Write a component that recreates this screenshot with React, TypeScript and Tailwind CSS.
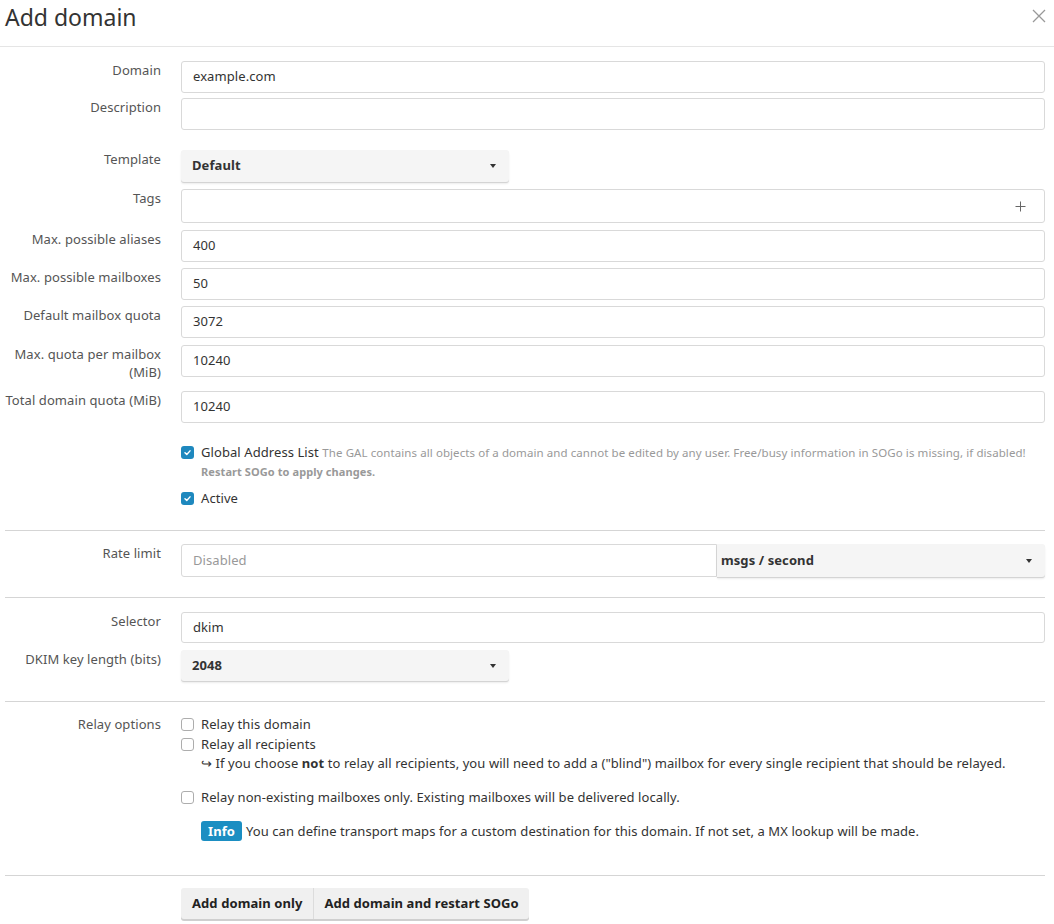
import React from "react";

const font = { fontFamily: '"Noto Sans", "Open Sans", sans-serif' };

function Caret() {
  return <span className="ml-auto inline-block h-0 w-0 border-x-[3px] border-t-[4px] border-x-transparent border-t-[#333]" />;
}

function Input({ value, placeholder, short }: { value?: string; placeholder?: string; short?: boolean }) {
  return (
    <div className={`flex ${short ? "h-[31px]" : "h-[32px]"} items-center rounded-[3px] border border-[#d9d9d9] bg-white px-[11px] text-[13px] text-[#333]`}>
      {value ? value : <span className="text-[#999]">{placeholder}</span>}
    </div>
  );
}

function Select({ value, short }: { value: string; short?: boolean }) {
  return (
    <div className={`flex ${short ? "h-[31px]" : "h-[32px]"} w-[328px] items-center rounded-[3px] bg-[#f5f5f5] px-[11px] pr-[13px] text-[13px] font-bold text-[#333] shadow-[0_1px_0_#d4d4d4,0_2px_2px_rgba(0,0,0,0.08)]`}>
      {value}
      <Caret />
    </div>
  );
}

function Check({ on }: { on?: boolean }) {
  return on ? (
    <span className="flex h-[13px] w-[13px] shrink-0 items-center justify-center rounded-[3px] bg-[#1e88be]">
      <svg width="9" height="9" viewBox="0 0 10 10">
        <path d="M2.2 5.2 L4.2 7.1 L7.8 3.2" fill="none" stroke="white" strokeWidth="1.6" strokeLinecap="round" strokeLinejoin="round" />
      </svg>
    </span>
  ) : (
    <span className="h-[13px] w-[13px] shrink-0 rounded-[3px] border border-[#adadad] bg-white" />
  );
}

function Row({ label, children, className = "" }: { label?: React.ReactNode; children: React.ReactNode; className?: string }) {
  return (
    <div className={`flex ${className}`}>
      <div className="w-[156px] shrink-0 text-right text-[13px] leading-[18px] text-[#555]">{label}</div>
      <div className="ml-[20px] w-[864px]">{children}</div>
    </div>
  );
}

function Hr({ className = "" }: { className?: string }) {
  return <div className={`h-px w-[1040px] bg-[#d5d5d5] ${className}`} />;
}

export default function App() {
  return (
    <div className="h-[924px] w-[1054px] overflow-hidden bg-white" style={font}>
      <div className="flex h-[47px] items-start border-b border-[#e5e5e5] px-[5px]">
        <h1 className="mt-[2px] text-[23px] leading-[30px] text-[#333]">Add domain</h1>
        <svg className="ml-auto mr-[3px] mt-[9px]" width="14" height="14" viewBox="0 0 14 14">
          <path d="M1 1 L13 13 M13 1 L1 13" stroke="#999" strokeWidth="1.3" />
        </svg>
      </div>

      <div className="px-[5px] pt-[14px] tracking-[0.08px]">
        <Row label="Domain">
          <Input value="example.com" />
        </Row>
        <Row label="Description" className="mt-[5px]">
          <Input />
        </Row>
        <Row label="Template" className="mt-[20px]">
          <Select value="Default" />
        </Row>
        <Row label="Tags" className="mt-[7px]">
          <div className="flex h-[34px] items-center rounded-[3px] border border-[#d9d9d9] bg-white pr-[18px]">
            <svg className="ml-auto" width="11" height="11" viewBox="0 0 11 11">
              <path d="M5.5 0.5 V10.5 M0.5 5.5 H10.5" stroke="#666" strokeWidth="1" />
            </svg>
          </div>
        </Row>
        <Row label="Max. possible aliases" className="mt-[7px]">
          <Input value="400" />
        </Row>
        <Row label="Max. possible mailboxes" className="mt-[6px]">
          <Input value="50" />
        </Row>
        <Row label="Default mailbox quota" className="mt-[6px]">
          <Input value="3072" />
        </Row>
        <Row label={<>Max. quota per mailbox<br />(MiB)</>} className="mt-[7px]">
          <Input value="10240" />
        </Row>
        <Row label="Total domain quota (MiB)" className="mt-[10px]">
          <Input value="10240" />
        </Row>

        <Row className="mt-[21px]">
          <div className="flex items-start gap-[7px]">
            <span className="mt-[2px]"><Check on /></span>
            <div className="text-[13px] leading-[17px] text-[#333]">
              Global Address List{" "}
              <span className="text-[11.5px] text-[#999]">
                The GAL contains all objects of a domain and cannot be edited by any user. Free/busy information in SOGo is missing, if disabled!
              </span>
              <div className="mt-[2px] text-[11px] font-bold text-[#999]">Restart SOGo to apply changes.</div>
            </div>
          </div>
          <div className="mt-[10px] flex items-center gap-[7px] text-[13px] leading-[17px] text-[#333]">
            <Check on />
            Active
          </div>
        </Row>

        <Hr className="mt-[23px]" />

        <Row label="Rate limit" className="mt-[13px]">
          <div className="flex h-[33px]">
            <div className="flex w-[536px] items-center rounded-l-[3px] border border-[#d9d9d9] px-[11px] text-[13px] text-[#999]">Disabled</div>
            <div className="flex flex-1 items-center rounded-r-[3px] bg-[#f5f5f5] px-[4px] pr-[13px] text-[13px] font-bold text-[#333] shadow-[0_1px_0_#d4d4d4,0_2px_2px_rgba(0,0,0,0.08)]">
              msgs / second
              <Caret />
            </div>
          </div>
        </Row>

        <Hr className="mt-[20px]" />

        <Row label="Selector" className="mt-[14px]">
          <Input value="dkim" short />
        </Row>
        <Row label="DKIM key length (bits)" className="mt-[7px]">
          <Select value="2048" short />
        </Row>

        <Hr className="mt-[20px]" />

        <Row label="Relay options" className="mt-[13px]">
          <div className="text-[13px] leading-[19px] text-[#333]">
            <div className="flex items-center gap-[7px]"><Check />Relay this domain</div>
            <div className="mt-px flex items-center gap-[7px]"><Check />Relay all recipients</div>
            <div className="ml-[20px]">↪ If you choose <b>not</b> to relay all recipients, you will need to add a ("blind") mailbox for every single recipient that should be relayed.</div>
            <div className="mt-[15px] flex items-center gap-[7px]"><Check />Relay non-existing mailboxes only. Existing mailboxes will be delivered locally.</div>
            <div className="ml-[20px] mt-[14px] flex items-center gap-[4px]">
              <span className="rounded-[3px] bg-[#1b8ec2] px-[7px] text-[13px] font-bold leading-[20px] text-white">Info</span>
              You can define transport maps for a custom destination for this domain. If not set, a MX lookup will be made.
            </div>
          </div>
        </Row>

        <Hr className="mt-[34px]" />

        <Row className="mt-[12px]">
          <div className="inline-flex h-[31px] rounded-[3px] bg-[#f0f0f0] text-[13px] font-bold text-[#222] shadow-[0_2px_0_#cfcfcf]">
            <div className="flex items-center border-r border-[#dcdcdc] px-[11px]">Add domain only</div>
            <div className="flex items-center px-[10px]">Add domain and restart SOGo</div>
          </div>
        </Row>
      </div>
    </div>
  );
}
